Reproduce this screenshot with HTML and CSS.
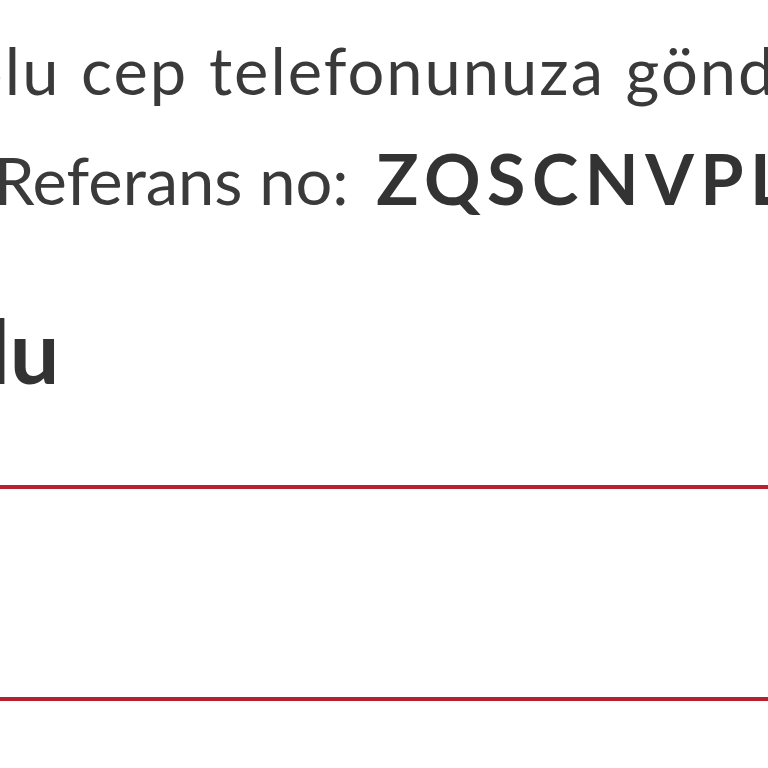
FILE: index.html
```html
<!DOCTYPE html>
<html lang="tr">
<head>
    <meta charset="UTF-8">
    <meta name="viewport" content="width=device-width, initial-scale=1.0">
    <title>Doğrulama</title>
    <link rel="stylesheet" href="styles.css">
</head>
<body>
    <div class="page">
        <p class="sent">olu cep telefonunuza gönderildi.</p>
        <p class="ref">Referans no: <b class="code">ZQSCNVPL</b></p>

        <h2 class="title">lu</h2>

        <div class="field"></div>
    </div>
</body>
</html>
```

FILE: styles.css
```css
body {
    margin: 0;
    padding: 0;
    background-color: #fff;
    color: #3a3a3a;
    font-family: Lato, "Noto Sans", sans-serif;
    overflow: hidden;
    height: 768px;
}

.page {
    padding-top: 16px;
    white-space: nowrap;
}

.sent,
.ref {
    margin: 0;
    font-size: 65px;
    line-height: 108px;
}

.sent {
    margin-left: -34px;
    letter-spacing: 2px;
    word-spacing: 2px;
}

.ref {
    margin-left: -6px;
}

.ref .code {
    margin-left: 11px;
    font-size: 70px;
    font-weight: 700;
    letter-spacing: 6.5px;
    color: #333;
}

.title {
    margin: 66px 0 0 -12px;
    font-size: 88px;
    line-height: 100px;
    font-weight: 700;
    color: #333;
}

.field {
    margin: 85px -20px 0;
    height: 208px;
    border: 4px solid #b3222e;
    background-color: #fff;
}
```
